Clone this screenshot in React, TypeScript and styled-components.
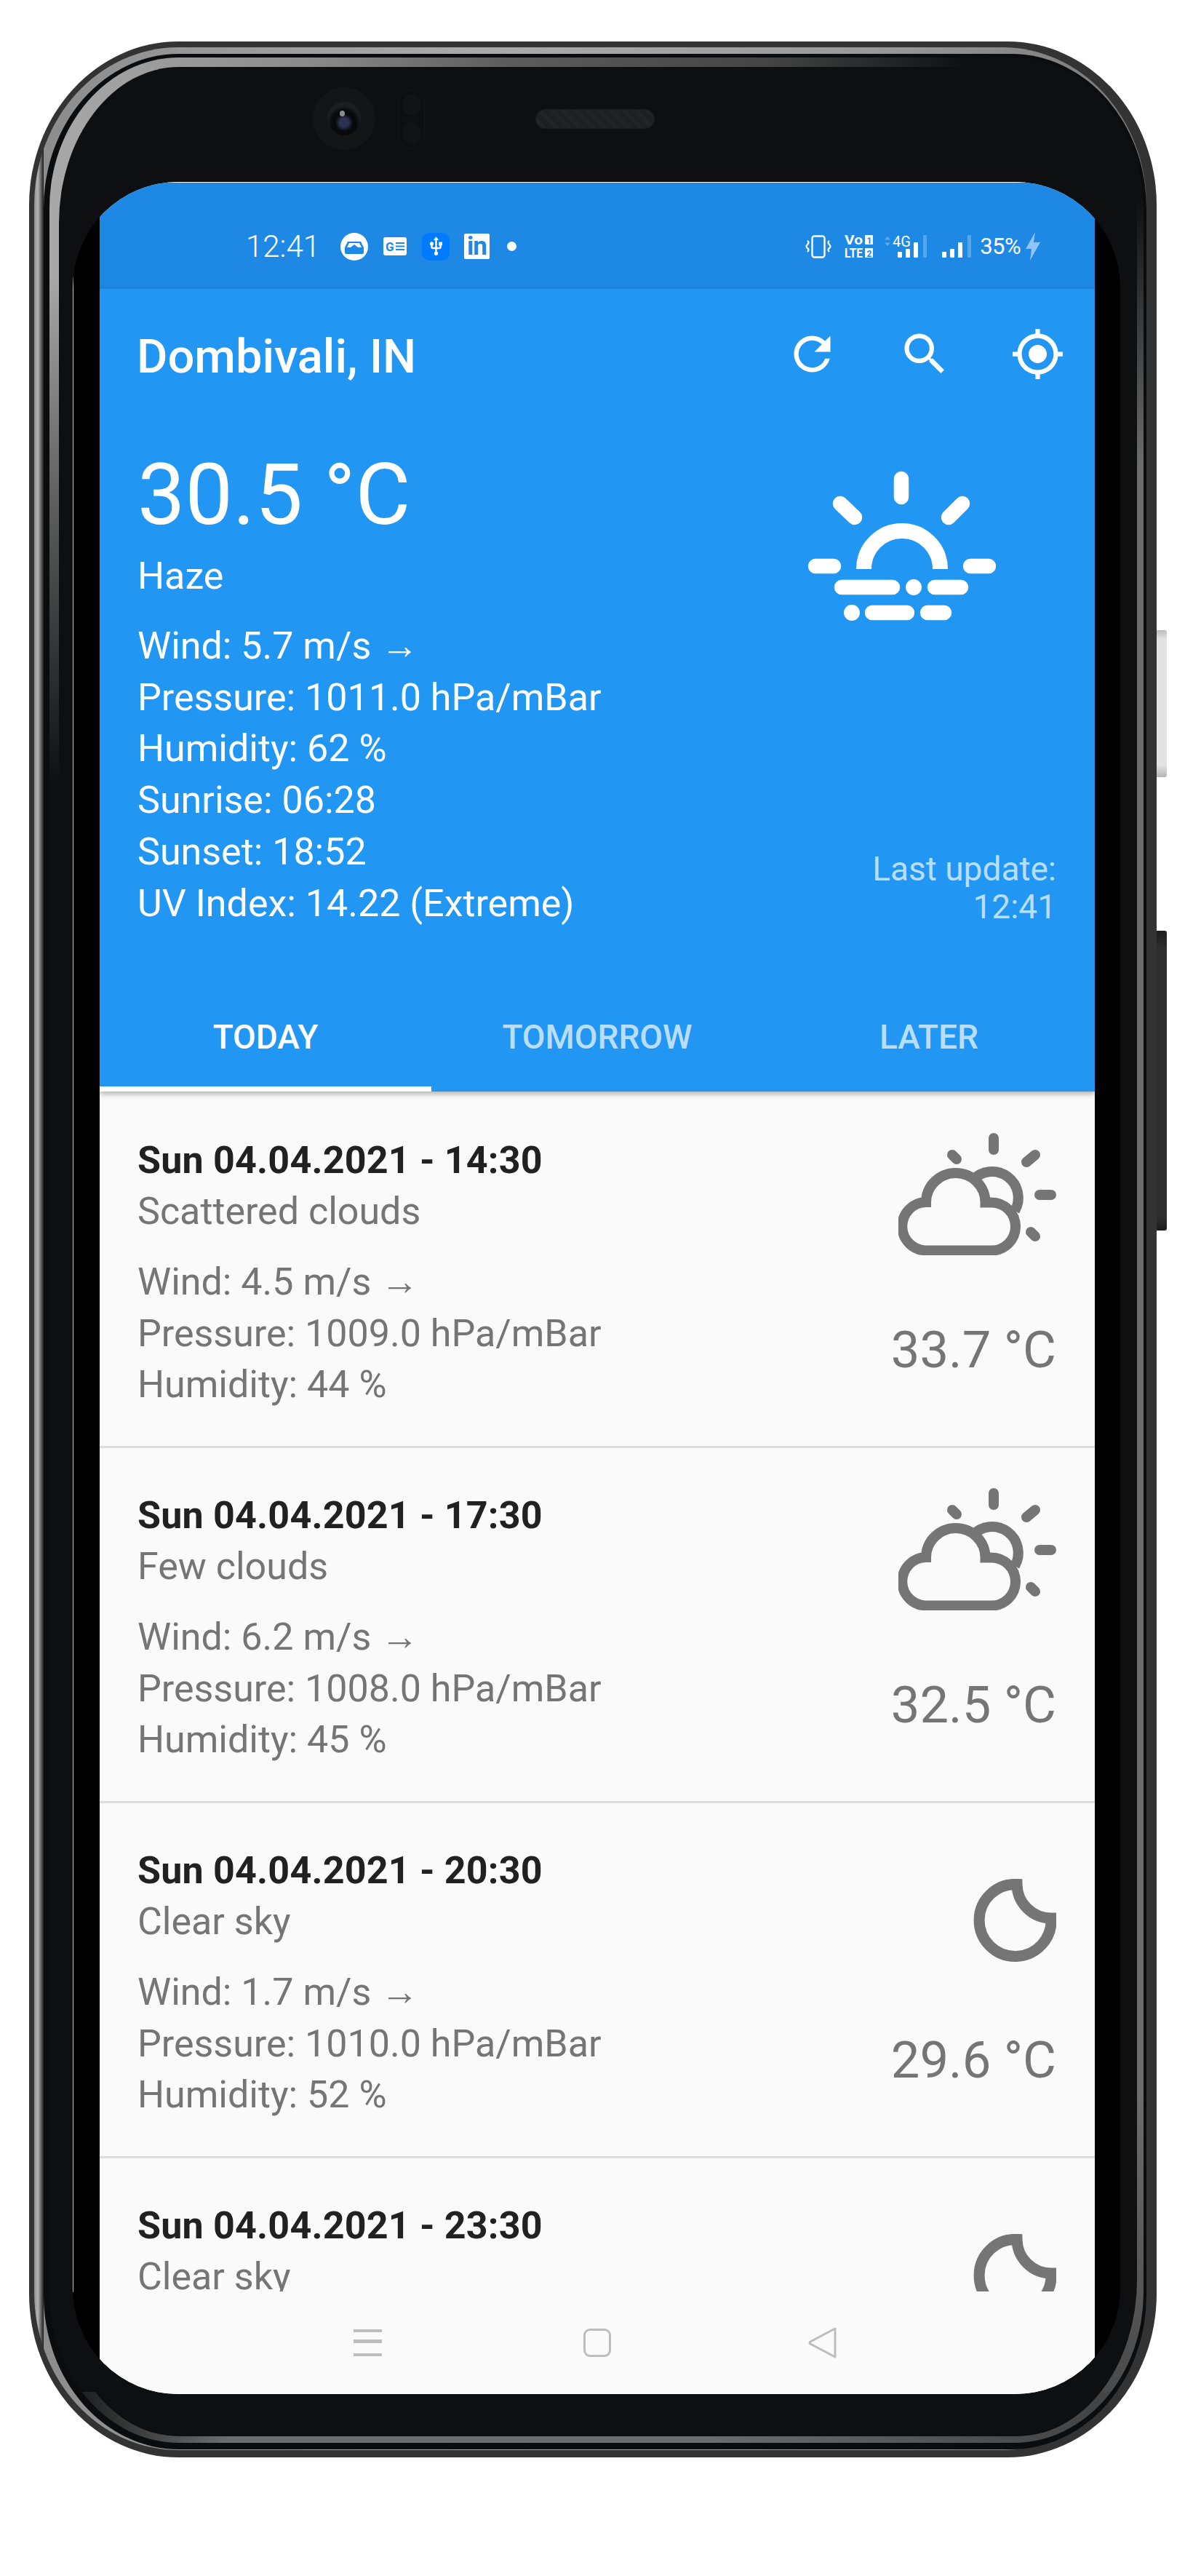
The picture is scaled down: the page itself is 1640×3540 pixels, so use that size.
import styled, { createGlobalStyle } from 'styled-components';
import { MdRefresh, MdSearch, MdMyLocation, MdUsb } from 'react-icons/md';

const GlobalStyle = createGlobalStyle`
  html, body {
    margin: 0;
    padding: 0;
    background: #fff;
    font-family: Roboto, "Noto Sans", "Liberation Sans", sans-serif;
  }
  * { box-sizing: border-box; }
`;

const Page = styled.div`
  width: 1640px;
  height: 3540px;
  padding: 57px 0 0 40px;
  overflow: hidden;
`;

const Phone = styled.div`
  position: relative;
  width: 1550px;
  height: 3320px;
  padding: 8px 14px 10px 7px;
  background: #333;
  border-radius: 205px / 225px;
`;

const SideButton = styled.div<{ $top: number; $height: number; $light?: boolean }>`
  position: absolute;
  left: 100%;
  top: ${p => p.$top}px;
  width: 14px;
  height: ${p => p.$height}px;
  border-radius: 0 3px 3px 0;
  background: ${p =>
    p.$light
      ? 'linear-gradient(#bbb, #e2e2e2 6%, #e2e2e2 92%, #b5b5b5)'
      : 'linear-gradient(#1c1c1c, #2e2e2e 6%, #2e2e2e 95%, #1c1c1c)'};
`;

const OuterEdge = styled.div`
  height: 100%;
  padding: 9px 0 1px 13px;
  border-radius: 198px / 217px;
  background:
    linear-gradient(to right, #8f8f8f 0, #b5b5b5 5px, #6a6a6a 9px, #1c1c1c 13px) left / 13px 100% no-repeat,
    linear-gradient(to right, #8c8c8c, #aaa 40%, #9a9a9a 75%, #777);
`;

const Groove = styled.div`
  height: 100%;
  padding: 5px 4px 9px 8px;
  border-radius: 186px / 212px;
  background: #0b0c0e;
`;

const InnerEdge = styled.div`
  height: 100%;
  padding: 13px 9px 9px 13px;
  border-radius: 178px / 207px;
  background:
    linear-gradient(to right, #a8a8a8 0, #8a8a8a 24%, #5c5c5c 42%, #444 66%, #0e0f11 84%) top / 100% 190px no-repeat,
    linear-gradient(to right, #0e0f11 0, #3c3c3c 8%, #6c6c6c 16%, #6c6c6c 60%, #444 95%) bottom / 100% 70px no-repeat,
    linear-gradient(to bottom, #a8a8a8 300px, #5c5c5c 620px, #0e0f11 1000px) left / 120px 100% no-repeat,
    linear-gradient(to bottom, #0e0f11 190px, #6c6c6c 560px, #6c6c6c 2800px, #444 100%);
`;

const Bezel = styled.div`
  display: flex;
  flex-direction: column;
  height: 100%;
  padding: 0 23px 58px 19px;
  border-radius: 165px / 215px;
  background: #0e0f11;
`;

const TopHardware = styled.div`
  display: flex;
  align-items: center;
  flex: none;
  height: 158px;
  padding: 0 0 16px 330px;
`;

const Camera = styled.div`
  display: flex;
  align-items: center;
  justify-content: center;
  width: 86px;
  height: 86px;
  border-radius: 50%;
  background: #141517;
`;

const Lens = styled.div`
  position: relative;
  width: 46px;
  height: 46px;
  border-radius: 50%;
  background: radial-gradient(circle at 50% 62%, #2b3350 0 6px, #08090c 12px 17px, #1d1e22 23px);
  &::after {
    content: '';
    position: absolute;
    top: 12px;
    left: 17px;
    width: 7px;
    height: 8px;
    border-radius: 50%;
    background: #8d8d8d;
  }
`;

const Sensor = styled.div`
  display: flex;
  flex-direction: column;
  justify-content: space-between;
  align-items: center;
  width: 36px;
  height: 81px;
  margin-left: 32px;
  padding: 5px 0;
  border: 1px solid #151618;
  border-radius: 18px;
`;

const SensorDot = styled.div`
  width: 26px;
  height: 30px;
  border-radius: 50%;
  background: #121315;
`;

const Speaker = styled.div`
  width: 164px;
  height: 27px;
  margin-left: 152px;
  border: 1px solid #1b1c1e;
  border-radius: 13px;
  background: repeating-linear-gradient(45deg, #1a1b1d 0 1px, #26272a 1px 2px);
`;

const DisplayMask = styled.div`
  position: relative;
  flex: 1;
  min-height: 0;
  padding: 0 35px 0 37px;
  border-radius: 145px;
  overflow: hidden;
  background: #000;
  &::before {
    content: '';
    position: absolute;
    top: 130px;
    bottom: 140px;
    left: 0;
    width: 1px;
    background: #c8c8c8;
  }
`;

const Screen = styled.div`
  display: flex;
  flex-direction: column;
  height: 100%;
  border-top: 1px solid #fff;
  background: #fafafa;
`;

const StatusBar = styled.div`
  display: flex;
  align-items: center;
  justify-content: space-between;
  flex: none;
  height: 146px;
  padding: 29px 75px 0 201px;
  background: #1e88e5;
  color: #fff;
`;

const StatusGroup = styled.div`
  display: flex;
  align-items: center;
`;

const StatusTime = styled.span`
  width: 130px;
  font-size: 42px;
  font-weight: 300;
`;

const RoundIcon = styled.svg`
  display: block;
  overflow: visible;
`;

const UsbBadge = styled.div`
  display: flex;
  align-items: center;
  justify-content: center;
  width: 38px;
  height: 38px;
  margin: 0 20px 0 21px;
  border-radius: 10px;
  background: #007aff;
  font-size: 29px;
`;

const LinkedInBadge = styled.div`
  display: flex;
  align-items: center;
  justify-content: center;
  width: 35px;
  height: 35px;
  border-radius: 2px;
  background: #fff;
  color: #1e88e5;
  font-size: 35px;
  font-weight: 700;
  line-height: 35px;
  letter-spacing: -1px;
`;

const StatusDot = styled.div`
  width: 13px;
  height: 13px;
  margin-left: 24px;
  border-radius: 50%;
  background: #fff;
`;

const BatteryText = styled.span`
  margin: 0 7px 0 12px;
  font-size: 31px;
  font-weight: 400;
  letter-spacing: -0.6px;
`;

const Header = styled.div`
  position: relative;
  z-index: 1;
  flex: none;
  background: #2196f3;
  box-shadow: 0 3px 8px rgba(0, 0, 0, 0.32);
  color: #fff;
`;

const AppBar = styled.div`
  display: flex;
  align-items: center;
  justify-content: space-between;
  height: 186px;
  padding: 0 40px 0 51px;
`;

const AppTitle = styled.h1`
  margin: 0;
  font-size: 65px;
  font-weight: 500;
`;

const AppActions = styled.div`
  display: flex;
  gap: 80px;
  margin-bottom: 8px;
  margin-right: 1px;
  font-size: 75px;
  line-height: 0;
`;

const Current = styled.div`
  display: flex;
  justify-content: space-between;
  height: 767px;
  padding: 32px 53px 0 52px;
`;

const CurrentInfo = styled.div`
  display: flex;
  flex-direction: column;
`;

const CurrentTemp = styled.div`
  font-size: 116.5px;
  line-height: 130px;
  font-weight: 400;
`;

const CurrentSummary = styled.div`
  margin: 12px 0 26px;
  font-size: 52px;
  line-height: 70px;
`;

const DetailLine = styled.div`
  font-size: 52px;
  line-height: 70.7px;
  white-space: nowrap;
`;

const CurrentAside = styled.div`
  display: flex;
  flex-direction: column;
  align-items: flex-end;
`;

const BigIcon = styled.svg`
  display: block;
  margin: 5px 32px 0 0;
`;

const LastUpdate = styled.div`
  margin: auto 0 78px;
  font-size: 46px;
  line-height: 52px;
  text-align: right;
  color: rgba(255, 255, 255, 0.7);
`;

const Tabs = styled.div`
  display: grid;
  grid-template-columns: repeat(3, 1fr);
  height: 150px;
`;

const Tab = styled.div<{ $active?: boolean }>`
  display: flex;
  align-items: center;
  justify-content: center;
  padding-top: ${p => (p.$active ? 7 : 0)}px;
  font-size: 46px;
  font-weight: 500;
  color: ${p => (p.$active ? '#fff' : 'rgba(255, 255, 255, 0.7)')};
  border-bottom: ${p => (p.$active ? '7px solid #fff' : 'none')};
`;

const Forecast = styled.div`
  flex: 1;
  min-height: 0;
  padding-top: 2px;
  overflow: hidden;
`;

const Row = styled.div`
  display: flex;
  justify-content: space-between;
  height: 488px;
  padding: 58px 53px 0 52px;
  border-bottom: 3px solid #dcdcdc;
  color: #757575;
`;

const RowInfo = styled.div`
  display: flex;
  flex-direction: column;
`;

const RowTitle = styled.div`
  font-size: 52px;
  line-height: 70px;
  font-weight: 700;
  letter-spacing: 0.2px;
  color: #212121;
`;

const RowSummary = styled.div`
  margin-bottom: 27px;
  font-size: 52px;
  line-height: 70px;
`;

const RowAside = styled.div`
  display: flex;
  flex-direction: column;
  align-items: flex-end;
`;

const RowIconBox = styled.div`
  display: flex;
  align-items: flex-end;
  height: 168px;
  margin-top: -3px;
`;

const RowTemp = styled.div`
  margin-top: 80px;
  font-size: 70.5px;
  line-height: 100px;
`;

const NavBar = styled.div`
  display: flex;
  align-items: center;
  flex: none;
  height: 141px;
  padding: 0 0 0 349px;
  background: #fafafa;
`;

const NavMenu = styled.div`
  display: flex;
  flex-direction: column;
  justify-content: space-between;
  width: 39px;
  height: 37px;
  margin-right: 277px;
  border-top: 4px solid #bdbdbd;
  border-bottom: 4px solid #bdbdbd;
  &::before {
    content: '';
    display: block;
    height: 5px;
    margin-top: 10px;
    background: #bdbdbd;
  }
`;

const NavHome = styled.div`
  width: 38px;
  height: 39px;
  margin-right: 271px;
  border: 3px solid #bdbdbd;
  border-radius: 9px;
`;

const SunHaze = () => (
  <BigIcon width="360" height="260" viewBox="0 0 360 260" fill="none" stroke="#fff" strokeWidth="20.5" strokeLinecap="round">
    <path d="M179 38V63M95 72L115 91M263 72L244 91M61 158H86M274 158H299" />
    <path d="M127.5 162A52.5 52.5 0 0 1 232.5 162" strokeWidth="21" strokeLinecap="butt" />
    <path d="M97 187H167M225 187H261M139 222H187M215 222H238" />
    <circle cx="196" cy="187" r="11" fill="#fff" stroke="none" />
    <circle cx="111" cy="222" r="11" fill="#fff" stroke="none" />
  </BigIcon>
);

const CloudSun = () => (
  <svg width="217" height="168" viewBox="36 27 217 168" fill="none" stroke="#757575" strokeWidth="14" strokeLinecap="round">
    <path d="M75 188.5H164A33 33 0 0 0 164 122.5H155.5A40.5 40 0 0 0 74 122A33 33 0 0 0 75 188.5Z" strokeLinecap="butt" />
    <path d="M138 92A36 36 0 0 1 196 134" strokeLinecap="butt" />
    <path d="M167 34V50M110 57L116 63M224 57L212 67M230 112H246M218 163L224 169" />
  </svg>
);

const Moon = () => (
  <svg width="114" height="114" viewBox="0 0 114 114" fill="none" stroke="#757575" strokeWidth="15" style={{ marginBottom: 5 }}>
    <path d="M107 54A49.5 49.5 0 1 1 60 7.5A47 47 0 0 0 107 54Z" />
  </svg>
);

const InboxIcon = () => (
  <RoundIcon width="38" height="38" viewBox="0 0 38 38">
    <circle cx="19" cy="19" r="19" fill="#fff" />
    <path d="M10 12H28L32 20V27Q32 29 30 29H8Q6 29 6 27V20Z" fill="#1e88e5" />
    <path d="M12 14H26L29 20H24L19 16L14 20H9Z" fill="#fff" />
  </RoundIcon>
);

const GNewsIcon = () => (
  <RoundIcon width="32" height="25" viewBox="0 0 32 25" style={{ marginLeft: 21 }}>
    <rect width="32" height="25" rx="3" fill="#fff" />
    <text x="3" y="19" fontFamily="Roboto, sans-serif" fontSize="17" fontWeight="700" fill="#1e88e5">G</text>
    <path d="M17 8H29M17 12.5H29M17 17H29" stroke="#1e88e5" strokeWidth="2" />
  </RoundIcon>
);

const VibrateIcon = () => (
  <RoundIcon width="34" height="32" viewBox="0 0 34 32" fill="none" stroke="#fff" style={{ marginRight: 19 }}>
    <rect x="8.5" y="1.5" width="17" height="29" rx="3" strokeWidth="2.4" />
    <path d="M2 8Q5 10 2 13T2 18T2 23M32 8Q29 10 32 13T32 18T32 23" strokeWidth="2.2" />
  </RoundIcon>
);

const VoLteIcon = () => (
  <RoundIcon width="39" height="33" viewBox="0 0 39 33" style={{ marginRight: 15 }}>
    <text x="0" y="14" fontFamily="Roboto, sans-serif" fontSize="19" fontWeight="700" fill="#fff" textLength="25" lengthAdjust="spacingAndGlyphs">Vo</text>
    <text x="0" y="32" fontFamily="Roboto, sans-serif" fontSize="19" fontWeight="700" fill="#fff" textLength="25" lengthAdjust="spacingAndGlyphs">LTE</text>
    <rect x="28" y="1" width="11" height="13" fill="#fff" />
    <rect x="28" y="19" width="11" height="13" fill="#fff" />
    <text x="30.5" y="12.5" fontFamily="Roboto, sans-serif" fontSize="12" fontWeight="700" fill="#1e88e5">1</text>
    <text x="30.5" y="30.5" fontFamily="Roboto, sans-serif" fontSize="12" fontWeight="700" fill="#1e88e5">2</text>
  </RoundIcon>
);

const SignalIcon = ({ network }: { network?: boolean }) => (
  <RoundIcon width={network ? 59 : 41} height="32" viewBox={network ? '0 0 59 32' : '18 0 41 32'} style={{ marginRight: network ? 20 : 0 }}>
    {network && (
      <>
        <path d="M5 2L9 6.5H1ZM5 15L9 10.5H1Z" fill="rgba(255,255,255,0.3)" />
        <text x="12" y="15.5" fontFamily="Roboto, sans-serif" fontSize="21" fill="#fff" textLength="25" lengthAdjust="spacingAndGlyphs">4G</text>
      </>
    )}
    <rect x="19" y="23" width="6" height="8" rx="1" fill="#fff" />
    <rect x="30" y="19" width="6" height="12" rx="1" fill="#fff" />
    <rect x="41" y="10" width="6" height="21" rx="1" fill="#fff" />
    <rect x="54" y="0" width="5" height="31" rx="1" fill="rgba(255,255,255,0.25)" />
  </RoundIcon>
);

const BoltIcon = () => (
  <RoundIcon width="20" height="39" viewBox="0 0 20 39">
    <path d="M13 0L0 23H8L6 39L20 14H11Z" fill="#90c4f9" />
  </RoundIcon>
);

const BackIcon = () => (
  <svg width="40" height="43" viewBox="0 0 40 43" fill="none" stroke="#bdbdbd" strokeWidth="3" strokeLinejoin="round">
    <path d="M37 2V41L3 23Q1 21.5 3 20Z" />
  </svg>
);

interface ForecastItem {
  date: string;
  summary: string;
  wind?: string;
  pressure?: string;
  humidity?: string;
  temp?: string;
  night?: boolean;
}

// the last row is cut by the nav bar, only its head is on screen
const forecast: ForecastItem[] = [
  { date: 'Sun 04.04.2021 - 14:30', summary: 'Scattered clouds', wind: '4.5', pressure: '1009.0', humidity: '44', temp: '33.7' },
  { date: 'Sun 04.04.2021 - 17:30', summary: 'Few clouds', wind: '6.2', pressure: '1008.0', humidity: '45', temp: '32.5' },
  { date: 'Sun 04.04.2021 - 20:30', summary: 'Clear sky', wind: '1.7', pressure: '1010.0', humidity: '52', temp: '29.6', night: true },
  { date: 'Sun 04.04.2021 - 23:30', summary: 'Clear sky', night: true },
];

export default function App() {
  return (
    <Page>
      <GlobalStyle />
      <Phone>
        <SideButton $top={809} $height={202} $light />
        <SideButton $top={1222} $height={412} />
        <OuterEdge>
          <Groove>
            <InnerEdge>
              <Bezel>
                <TopHardware>
                  <Camera>
                    <Lens />
                  </Camera>
                  <Sensor>
                    <SensorDot />
                    <SensorDot />
                  </Sensor>
                  <Speaker />
                </TopHardware>
                <DisplayMask>
                  <Screen>
                    <StatusBar>
                      <StatusGroup>
                        <StatusTime>12:41</StatusTime>
                        <InboxIcon />
                        <GNewsIcon />
                        <UsbBadge>
                          <MdUsb />
                        </UsbBadge>
                        <LinkedInBadge>in</LinkedInBadge>
                        <StatusDot />
                      </StatusGroup>
                      <StatusGroup>
                        <VibrateIcon />
                        <VoLteIcon />
                        <SignalIcon network />
                        <SignalIcon />
                        <BatteryText>35%</BatteryText>
                        <BoltIcon />
                      </StatusGroup>
                    </StatusBar>
                    <Header>
                      <AppBar>
                        <AppTitle>Dombivali, IN</AppTitle>
                        <AppActions>
                          <MdRefresh />
                          <MdSearch />
                          <MdMyLocation />
                        </AppActions>
                      </AppBar>
                      <Current>
                        <CurrentInfo>
                          <CurrentTemp>30.5 °C</CurrentTemp>
                          <CurrentSummary>Haze</CurrentSummary>
                          <DetailLine>Wind: 5.7 m/s →</DetailLine>
                          <DetailLine>Pressure: 1011.0 hPa/mBar</DetailLine>
                          <DetailLine>Humidity: 62 %</DetailLine>
                          <DetailLine>Sunrise: 06:28</DetailLine>
                          <DetailLine>Sunset: 18:52</DetailLine>
                          <DetailLine>UV Index: 14.22 (Extreme)</DetailLine>
                        </CurrentInfo>
                        <CurrentAside>
                          <SunHaze />
                          <LastUpdate>
                            Last update:
                            <br />
                            12:41
                          </LastUpdate>
                        </CurrentAside>
                      </Current>
                      <Tabs>
                        <Tab $active>TODAY</Tab>
                        <Tab>TOMORROW</Tab>
                        <Tab>LATER</Tab>
                      </Tabs>
                    </Header>
                    <Forecast>
                      {forecast.map(item => (
                        <Row key={item.date}>
                          <RowInfo>
                            <RowTitle>{item.date}</RowTitle>
                            <RowSummary>{item.summary}</RowSummary>
                            {item.wind && (
                              <>
                                <DetailLine>Wind: {item.wind} m/s →</DetailLine>
                                <DetailLine>Pressure: {item.pressure} hPa/mBar</DetailLine>
                                <DetailLine>Humidity: {item.humidity} %</DetailLine>
                              </>
                            )}
                          </RowInfo>
                          <RowAside>
                            <RowIconBox>{item.night ? <Moon /> : <CloudSun />}</RowIconBox>
                            {item.temp && <RowTemp>{item.temp} °C</RowTemp>}
                          </RowAside>
                        </Row>
                      ))}
                    </Forecast>
                    <NavBar>
                      <NavMenu />
                      <NavHome />
                      <BackIcon />
                    </NavBar>
                  </Screen>
                </DisplayMask>
              </Bezel>
            </InnerEdge>
          </Groove>
        </OuterEdge>
      </Phone>
    </Page>
  );
}
